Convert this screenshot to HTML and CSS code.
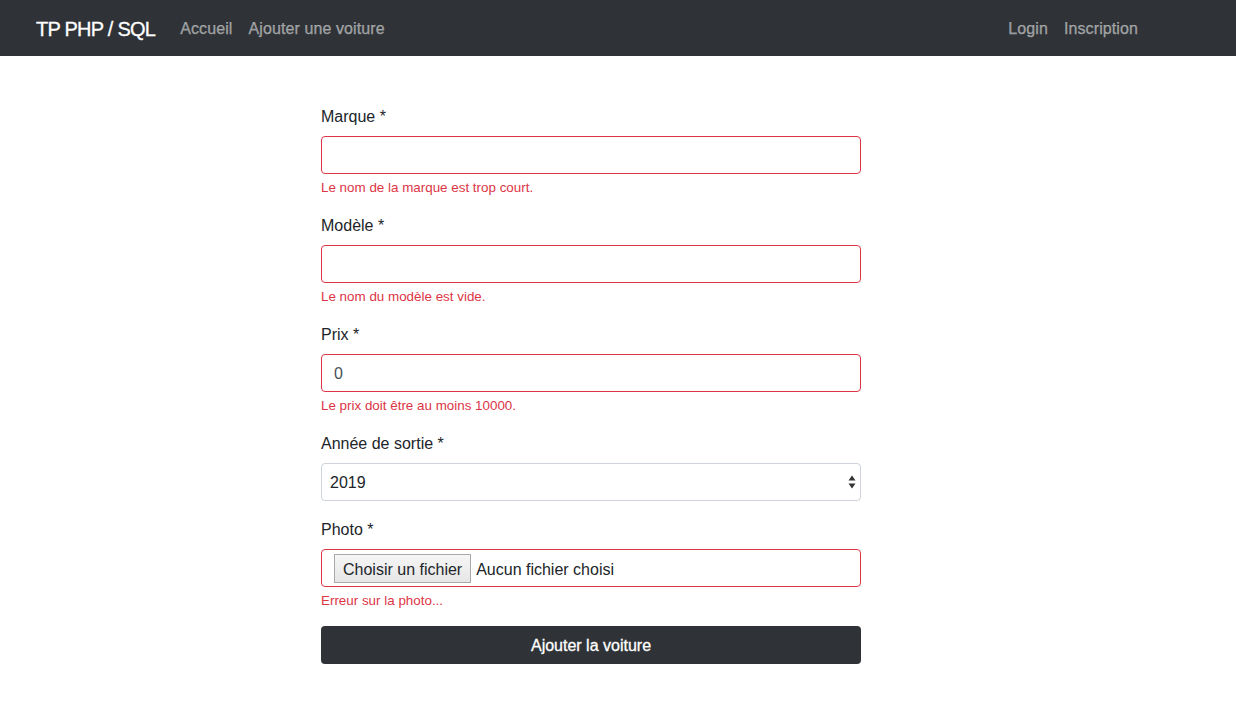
FILE: index.html
```html
<!DOCTYPE html>
<html lang="fr">
<head>
<meta charset="utf-8">
<title>TP PHP / SQL</title>
<link rel="stylesheet" href="styles.css">
</head>
<body>
<nav class="navbar">
  <a class="brand" href="#">TP PHP / SQL</a>
  <ul class="nav">
    <li><a class="nav-link" href="#">Accueil</a></li>
    <li><a class="nav-link" href="#">Ajouter une voiture</a></li>
  </ul>
  <ul class="nav nav-right">
    <li><a class="nav-link" href="#">Login</a></li>
    <li><a class="nav-link" href="#">Inscription</a></li>
  </ul>
</nav>
<main class="page">
  <form class="car-form">
    <div class="form-group">
      <label class="label">Marque *</label>
      <div class="control invalid"></div>
      <div class="feedback">Le nom de la marque est trop court.</div>
    </div>
    <div class="form-group">
      <label class="label">Modèle *</label>
      <div class="control invalid"></div>
      <div class="feedback">Le nom du modèle est vide.</div>
    </div>
    <div class="form-group">
      <label class="label">Prix *</label>
      <div class="control invalid">0</div>
      <div class="feedback">Le prix doit être au moins 10000.</div>
    </div>
    <div class="form-group">
      <label class="label">Année de sortie *</label>
      <div class="select">
        <span class="select-value">2019</span>
        <svg class="select-arrows" width="8" height="14" viewBox="0 0 8 14"><path d="M4 0.5 L7.5 5.5 L0.5 5.5 Z M4 13.5 L7.5 8.5 L0.5 8.5 Z" fill="#333"/></svg>
      </div>
    </div>
    <div class="form-group">
      <label class="label">Photo *</label>
      <div class="control invalid file">
        <span class="file-btn">Choisir un fichier</span>
        <span class="file-name">Aucun fichier choisi</span>
      </div>
      <div class="feedback">Erreur sur la photo...</div>
    </div>
    <div class="submit">Ajouter la voiture</div>
  </form>
</main>
</body>
</html>
```
FILE: styles.css
```css
* { box-sizing: border-box; }
html, body { margin: 0; padding: 0; }
body {
  font-family: "Liberation Sans", Arial, sans-serif;
  font-size: 16px;
  line-height: 1.5;
  color: #212529;
  background: #fff;
}
.navbar {
  height: 56px;
  background: #2f3337;
  display: flex;
  align-items: center;
  padding: 2px 90px 0 36px;
}
.brand {
  color: #fff;
  text-decoration: none;
  font-size: 20px;
  letter-spacing: -0.75px;
  margin-right: 17px;
  line-height: 30px;
  -webkit-text-stroke: 0.3px #fff;
}
.nav {
  display: flex;
  list-style: none;
  margin: 0;
  padding: 0;
}
.nav-right { margin-left: auto; }
.nav-link {
  display: block;
  padding: 8px;
  color: rgba(255,255,255,.5);
  text-decoration: none;
  letter-spacing: 0.1px;
  -webkit-text-stroke: 0.25px rgba(255,255,255,.5);
}
.page {
  padding: 48px 0 0 321px;
}
.car-form { width: 540px; }
.form-group { margin-bottom: 16px; }
.label {
  display: block;
  padding-top: 1px;
  margin-bottom: 7px;
}
.control {
  height: 38px;
  border: 1px solid #ced4da;
  border-radius: 4px;
  padding: 7px 12px 5px;
  color: #495057;
}
.control.invalid { border-color: #dc3545; }
.feedback {
  margin-top: 4px;
  font-size: 13.4px;
  line-height: 19px;
  height: 19px;
  color: #dc3545;
}
.select {
  position: relative;
  height: 38px;
  border: 1px solid #ced4da;
  border-radius: 4px;
  padding: 7px 8px 5px;
  color: #212529;
}
.select-arrows {
  position: absolute;
  right: 4px;
  top: 11px;
}
.file {
  display: flex;
  align-items: center;
  padding: 1px 12px 0;
  color: #212529;
}
.file-btn {
  height: 29px;
  line-height: 29px;
  padding: 0 8px;
  border: 1px solid #a9a9a9;
  background: linear-gradient(#f6f6f6, #e6e6e6);
  color: #212529;
  margin-right: 5px;
}
.file-name { padding-top: 2px; }
.submit {
  height: 38px;
  border-radius: 4px;
  background: #2f3337;
  color: #fff;
  text-align: center;
  line-height: 38px;
  padding-top: 1px;
  -webkit-text-stroke: 0.3px #fff;
}
```
